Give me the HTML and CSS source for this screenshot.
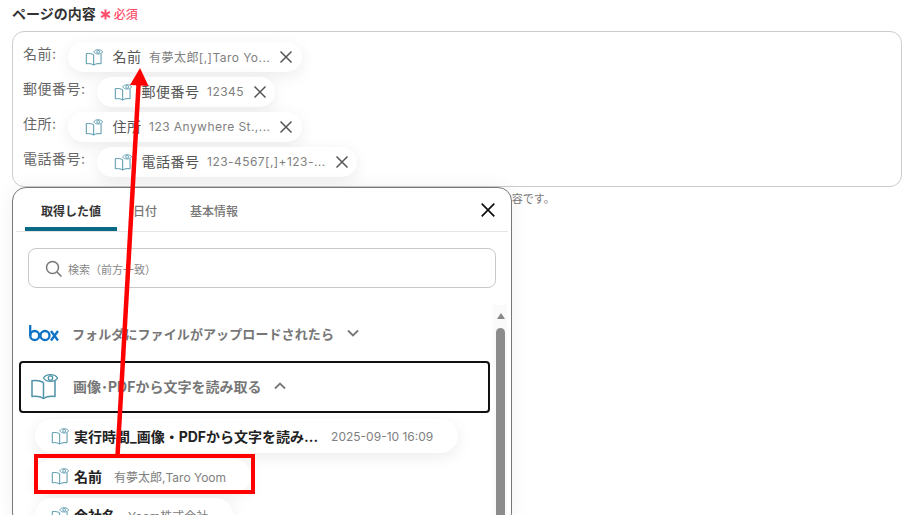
FILE: index.html
```html
<!DOCTYPE html>
<html lang="ja">
<head>
<meta charset="utf-8">
<title>ページの内容</title>
<link rel="stylesheet" href="styles.css">
</head>
<body>
<svg class="defs" width="0" height="0" aria-hidden="true">
  <symbol id="book" viewBox="0 0 28 28">
    <path d="M13.500 10.500C10.500 8.800 6.500 8.200 2 8.800V24.500C6.500 24 10.500 24.300 13.500 26.500C16.500 24.300 20.500 24 25 24.500V9" fill="none" stroke="currentColor" stroke-width="1.500" stroke-linejoin="round"/>
    <path d="M13.500 10.500V26.500" fill="none" stroke="currentColor" stroke-width="1.500"/>
    <path d="M13.500 6C16 1.500 25 1.500 27.500 6C25 10.500 16 10.500 13.500 6Z" fill="#fff" stroke="currentColor" stroke-width="1.300"/>
    <circle cx="20.500" cy="6" r="2.200" fill="none" stroke="currentColor" stroke-width="1.300"/>
  </symbol>
  <symbol id="close" viewBox="0 0 14 14">
    <path d="M1.500 1.500L12.500 12.500M12.500 1.500L1.500 12.500" fill="none" stroke="currentColor" stroke-width="1.500"/>
  </symbol>
</svg>
<main class="page">
  <div class="field-title">ページの内容<svg class="star" viewBox="0 0 10 10"><path d="M5 .5V9.500M1 2.700L9 7.300M9 2.700L1 7.300" fill="none" stroke="currentColor" stroke-width="1.800"/></svg><span class="required">必須</span></div>
  <div class="editor">
    <div class="row"><span class="row-label">名前:</span>
      <span class="chip"><svg class="chip-icon"><use href="#book"/></svg><span class="chip-name">名前</span><span class="chip-value">有夢太郎[,]Taro Yo...</span><svg class="chip-x"><use href="#close"/></svg></span></div>
    <div class="row"><span class="row-label">郵便番号:</span>
      <span class="chip"><svg class="chip-icon"><use href="#book"/></svg><span class="chip-name">郵便番号</span><span class="chip-value">12345</span><svg class="chip-x"><use href="#close"/></svg></span></div>
    <div class="row"><span class="row-label">住所:</span>
      <span class="chip"><svg class="chip-icon"><use href="#book"/></svg><span class="chip-name">住所</span><span class="chip-value">123 Anywhere St.,...</span><svg class="chip-x"><use href="#close"/></svg></span></div>
    <div class="row"><span class="row-label">電話番号:</span>
      <span class="chip"><svg class="chip-icon"><use href="#book"/></svg><span class="chip-name">電話番号</span><span class="chip-value">123-4567[,]+123-...</span><svg class="chip-x"><use href="#close"/></svg></span></div>
  </div>
  <p class="hint">入力した値はページの内容です。</p>

  <section class="popup">
    <div class="tabs">
      <span class="tab tab-active">取得した値</span>
      <span class="tab tab-date">日付</span>
      <span class="tab tab-info">基本情報</span>
      <svg class="popup-close"><use href="#close"/></svg>
    </div>
    <div class="search">
      <svg class="search-icon" viewBox="0 0 18 18"><circle cx="7.500" cy="7.500" r="6" fill="none" stroke="currentColor" stroke-width="1.500"/><path d="M12 12L16.500 16.500" stroke="currentColor" stroke-width="1.500"/></svg>
      <span>検索（前方一致）</span>
    </div>
    <div class="list">
      <div class="scrollbar"><span class="scroll-up"></span><span class="scroll-thumb"></span></div>
      <div class="group">
        <svg class="box-logo" viewBox="0 0 30 17"><g fill="none" stroke="#0f72c4" stroke-width="2.300"><path d="M1.200 0V11"/><circle cx="5.700" cy="10.500" r="4.500"/><circle cx="16" cy="10.500" r="4.500"/><path d="M22 6L29 15.500M29 6L22 15.500"/></g></svg>
        <span class="group-title group-title-box">フォルダにファイルがアップロードされたら</span>
        <svg class="chev" viewBox="0 0 12 8"><path d="M1 1.500L6 6.500L11 1.500" fill="none" stroke="currentColor" stroke-width="1.800"/></svg>
      </div>
      <div class="group group-open">
        <svg class="group-icon"><use href="#book"/></svg>
        <span class="group-title">画像･PDFから文字を読み取る</span>
        <svg class="chev" viewBox="0 0 12 8"><path d="M1 6.500L6 1.500L11 6.500" fill="none" stroke="currentColor" stroke-width="1.800"/></svg>
      </div>
      <div class="item"><svg class="item-icon"><use href="#book"/></svg><span class="item-name">実行時間_画像・PDFから文字を読み...</span><span class="item-value item-date">2025-09-10 16:09</span></div>
      <div class="item"><svg class="item-icon"><use href="#book"/></svg><span class="item-name">名前</span><span class="item-value">有夢太郎,Taro Yoom</span></div>
      <div class="item"><svg class="item-icon"><use href="#book"/></svg><span class="item-name">会社名</span><span class="item-value">Yoom株式会社</span></div>
    </div>
  </section>

  <div class="red-box"></div>
  <svg class="red-arrow" viewBox="0 0 909 515"><path d="M117.500 456L138.600 84" fill="none" stroke="#f00" stroke-width="4.500"/><path d="M140 68L148.500 86L130 85Z" fill="#f00"/></svg>
</main>
</body>
</html>
```
FILE: styles.css
```css
* { box-sizing: border-box; }
html, body { margin: 0; height: 100%; }
body {
  background: #fff;
  overflow: hidden;
  font-family: Inter, "Noto Sans CJK JP", sans-serif;
  color: #333;
}
.defs { position: absolute; }
.page {
  position: relative;
  width: 909px;
  height: 515px;
  overflow: hidden;
  padding: 4px 7px 0 12px;
}
.field-title {
  display: flex;
  align-items: center;
  height: 17px;
  font-size: 14px;
  font-weight: 700;
  color: #333;
}
.star {
  width: 11px;
  height: 11px;
  margin: 4px 3px 0 4px;
  color: #ff4d6a;
}
.required { margin-top: 2px; font-size: 12px; font-weight: 500; color: #ff4d6a; }
.editor {
  margin-top: 10px;
  height: 156px;
  border: 1px solid #ccc;
  border-radius: 12px;
  padding: 10px 10px 0;
  display: flex;
  flex-direction: column;
  gap: 5px;
}
.row {
  display: flex;
  align-items: flex-start;
  height: 30px;
  font-size: 14px;
  color: #666;
}
.row-label { line-height: 24px; letter-spacing: 0.5px; }
.chip {
  display: flex;
  align-items: center;
  height: 30px;
  margin-left: 11px;
  padding: 0 8.500px 0 17px;
  border-radius: 15px;
  background: #fff;
  box-shadow: 0 4px 16px rgba(0, 0, 0, 0.08);
}
.chip-icon { width: 18px; height: 18px; color: #4e93a8; flex: none; }
.chip-name { margin: 0 0 2px 10px; font-size: 14px; color: #555; letter-spacing: 0.5px; }
.chip-value { margin: 0 0 2px 7.500px; font-size: 12px; color: #808080; letter-spacing: 0.45px; white-space: nowrap; }
.chip-x { width: 14px; height: 14px; margin-left: 9px; color: #555; flex: none; }
.hint {
  margin: 3px 0 0;
  font-size: 11px;
  color: #777;
  padding-left: 379px;
  white-space: nowrap;
}
.popup {
  position: absolute;
  left: 12px;
  top: 187px;
  width: 500px;
  height: 340px;
  padding: 0 3px;
  background: #fff;
  border: 1px solid #777;
  border-radius: 14px;
  box-shadow: 0 0 20px rgba(0, 0, 0, 0.06);
}
.tabs {
  position: relative;
  display: flex;
  height: 44px;
  border-bottom: 1px solid #e5e5e5;
  font-size: 12px;
  font-weight: 500;
  color: #777;
}
.tab { line-height: 47px; white-space: nowrap; }
.tab-active {
  width: 92px;
  margin-left: 9px;
  text-align: center;
  font-weight: 700;
  color: #333;
  border-bottom: 4px solid #0a6a85;
  border-radius: 4px 4px 0 0;
}
.tab-date { margin-left: 16px; }
.tab-info { margin-left: 33px; }
.popup-close {
  position: absolute;
  right: 12px;
  top: 14px;
  width: 16px;
  height: 16px;
  color: #111;
}
.search {
  display: flex;
  align-items: center;
  gap: 5px;
  width: 468px;
  height: 40px;
  margin: 16px 0 0 12px;
  padding: 1px 0 0 16px;
  border: 1px solid #c8c8c8;
  border-radius: 8px;
  font-size: 11px;
  color: #888;
}
.search-icon { width: 18px; height: 18px; color: #777; }
.list { position: relative; margin-top: 17px; padding-left: 3px; }
.scrollbar {
  position: absolute;
  left: 477px;
  top: 0;
  width: 14px;
  height: 220px;
  background: #fafafa;
  padding: 0 3px;
}
.scroll-up {
  display: block;
  width: 0;
  margin: 8px 0 0 .5px;
  border-left: 4px solid transparent;
  border-right: 4px solid transparent;
  border-bottom: 6px solid #888;
}
.scroll-thumb {
  display: block;
  width: 9px;
  height: 200px;
  margin-top: 9px;
  background: #8c8c8c;
  border-radius: 5px 5px 0 0;
}
.group {
  display: flex;
  align-items: center;
  height: 56px;
  width: 471px;
  font-size: 13px;
  font-weight: 700;
  color: #777;
}
.box-logo { width: 30px; height: 17px; margin-left: 10px; }
.group-title { margin-left: 13px; white-space: nowrap; }
.group-title-box { letter-spacing: 0.1px; }
.chev { width: 12px; height: 8px; margin-left: 13px; color: #777; }
.group-open {
  height: 52px;
  padding-bottom: 2px;
  border: 2px solid #111;
  border-radius: 4px;
  font-size: 14px;
}
.group-icon { width: 28px; height: 28px; margin-left: 9px; color: #4e93a8; flex: none; }
.group-open .group-title { margin-left: 15px; }
.item {
  display: flex;
  align-items: center;
  width: max-content;
  height: 34px;
  margin: 6px 0 0 16px;
  padding: 0 25px 0 16px;
  border-radius: 17px;
  background: #fff;
  box-shadow: 0 4px 16px rgba(0, 0, 0, 0.08);
}
.item:last-child { margin-top: 5px; }
.item-icon { width: 18px; height: 18px; color: #4e93a8; flex: none; }
.item-name { margin-left: 5px; font-size: 14px; font-weight: 700; color: #222; white-space: nowrap; }
.item-value { margin-left: 12px; font-size: 12px; color: #808080; white-space: nowrap; }
.item-date { margin-left: 13px; }
.red-box {
  position: absolute;
  left: 34px;
  top: 454px;
  width: 221px;
  height: 40px;
  border: 4px solid #f00;
}
.red-arrow {
  position: absolute;
  left: 0;
  top: 0;
  width: 909px;
  height: 515px;
}
```
